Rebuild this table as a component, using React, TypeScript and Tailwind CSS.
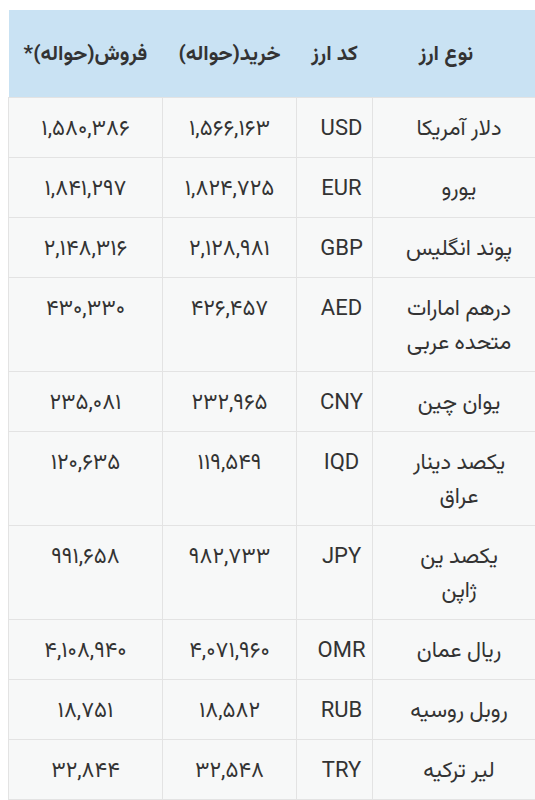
import React from "react";

type Rate = {
  name: string[];
  code: string;
  buy: string;
  sell: string;
};

const rates: Rate[] = [
  { name: ["دلار آمریکا"], code: "USD", buy: "۱,۵۶۶,۱۶۳", sell: "۱,۵۸۰,۳۸۶" },
  { name: ["یورو"], code: "EUR", buy: "۱,۸۲۴,۷۲۵", sell: "۱,۸۴۱,۲۹۷" },
  { name: ["پوند انگلیس"], code: "GBP", buy: "۲,۱۲۸,۹۸۱", sell: "۲,۱۴۸,۳۱۶" },
  { name: ["درهم امارات", "متحده عربی"], code: "AED", buy: "۴۲۶,۴۵۷", sell: "۴۳۰,۳۳۰" },
  { name: ["یوان چین"], code: "CNY", buy: "۲۳۲,۹۶۵", sell: "۲۳۵,۰۸۱" },
  { name: ["یکصد دینار", "عراق"], code: "IQD", buy: "۱۱۹,۵۴۹", sell: "۱۲۰,۶۳۵" },
  { name: ["یکصد ین", "ژاپن"], code: "JPY", buy: "۹۸۲,۷۳۳", sell: "۹۹۱,۶۵۸" },
  { name: ["ریال عمان"], code: "OMR", buy: "۴,۰۷۱,۹۶۰", sell: "۴,۱۰۸,۹۴۰" },
  { name: ["روبل روسیه"], code: "RUB", buy: "۱۸,۵۸۲", sell: "۱۸,۷۵۱" },
  { name: ["لیر ترکیه"], code: "TRY", buy: "۳۲,۵۴۸", sell: "۳۲,۸۴۴" },
];

const cell = "border border-[#e3e3e3] align-top text-center pt-[13px] pb-[12px]";

const App = () => {
  return (
    <main
      className="w-[535px] h-[800px] overflow-hidden bg-white pt-[10px] pl-[8px]"
      style={{ fontFamily: 'Roboto, "Vazirmatn", "Noto Sans Arabic", "DejaVu Sans", sans-serif' }}
    >
      <table dir="rtl" className="w-[537px] table-fixed border-collapse text-[#333] text-[21px] leading-[34px]">
        <colgroup>
          <col className="w-[173px]" />
          <col className="w-[76px]" />
          <col className="w-[134px]" />
          <col className="w-[154px]" />
        </colgroup>
        <thead>
          <tr className="bg-[#c9e2f3] h-[87px] border-b border-[#e3e3e3]">
            <th className="font-bold text-center pr-[26px]">نوع ارز</th>
            <th className="font-bold text-center">کد ارز</th>
            <th className="font-bold text-center">خرید(حواله)</th>
            <th className="font-bold text-center">فروش(حواله)*</th>
          </tr>
        </thead>
        <tbody>
          {rates.map((r) => (
            <tr key={r.code} className="bg-[#f7f8f8]">
              <td className={`${cell} px-2 text-[22px]`}>
                {r.name.map((line, i) => (
                  <div key={i}>{line}</div>
                ))}
              </td>
              <td className={`${cell} pl-[14px] text-[22px]`}>{r.code}</td>
              <td className={`${cell} text-[22px]`}>{r.buy}</td>
              <td className={`${cell} text-[22px]`}>{r.sell}</td>
            </tr>
          ))}
        </tbody>
      </table>
    </main>
  );
};

export default App;
